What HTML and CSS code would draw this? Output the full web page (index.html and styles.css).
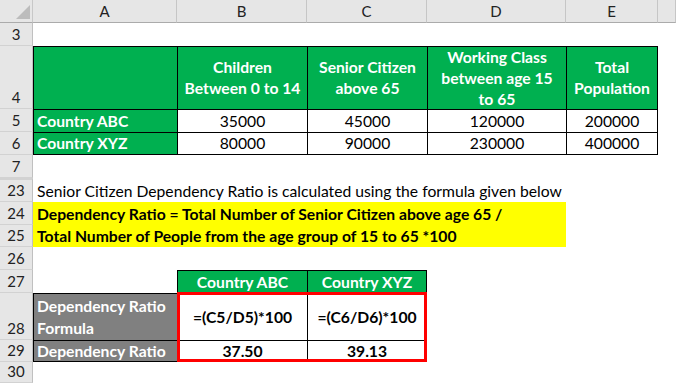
FILE: index.html
```html
<!DOCTYPE html>
<html>
<head>
<meta charset="utf-8">
<link rel="stylesheet" href="styles.css">
</head>
<body>
<div class="sheet">
  <div class="corner"><svg width="33" height="23" viewBox="0 0 33 23"><polygon points="16,19 30,19 30,5" fill="#bcbcbc"/></svg></div>
  <div class="colhead">A</div>
  <div class="colhead">B</div>
  <div class="colhead">C</div>
  <div class="colhead">D</div>
  <div class="colhead">E</div>
  <div class="colhead"></div>

  <div class="rowhead">3</div>
  <div class="fill s6"></div>

  <div class="rowhead">4</div>
  <div class="hd b"></div>
  <div class="hd b">Children<br>Between 0 to 14</div>
  <div class="hd b">Senior Citizen<br>above 65</div>
  <div class="hd b">Working Class<br>between age 15<br>to 65</div>
  <div class="hd b br">Total<br>Population</div>
  <div class="fill"></div>

  <div class="rowhead">5</div>
  <div class="lbl b">Country ABC</div>
  <div class="num b">35000</div>
  <div class="num b">45000</div>
  <div class="num b">120000</div>
  <div class="num b br">200000</div>
  <div class="fill"></div>

  <div class="rowhead">6</div>
  <div class="lbl b bb">Country XYZ</div>
  <div class="num b bb">80000</div>
  <div class="num b bb">90000</div>
  <div class="num b bb">230000</div>
  <div class="num b br bb">400000</div>
  <div class="fill"></div>

  <div class="rowhead">7</div>
  <div class="fill s6"></div>

  <div class="rowhead r23">23</div>
  <div class="note s6">Senior Citizen Dependency Ratio is calculated using the formula given below</div>

  <div class="rowhead">24</div>
  <div class="hl s4">Dependency Ratio = Total Number of Senior Citizen above age 65 /</div>
  <div class="fill s2"></div>

  <div class="rowhead">25</div>
  <div class="hl s4">Total Number of People from the age group of 15 to 65 *100</div>
  <div class="fill s2"></div>

  <div class="rowhead">26</div>
  <div class="fill s6"></div>

  <div class="rowhead">27</div>
  <div class="fill"></div>
  <div class="hd b">Country ABC</div>
  <div class="hd b br">Country XYZ</div>
  <div class="fill s3"></div>

  <div class="rowhead">28</div>
  <div class="gl b">Dependency Ratio<br>Formula</div>
  <div class="fm b">=(C5/D5)*100</div>
  <div class="fm b br">=(C6/D6)*100</div>
  <div class="fill s3"></div>

  <div class="rowhead">29</div>
  <div class="gl b bb">Dependency Ratio</div>
  <div class="fm b bb">37.50</div>
  <div class="fm b br bb">39.13</div>
  <div class="fill s3"></div>

  <div class="rowhead">30</div>
  <div class="fill s6"></div>

  <div class="sel"></div>
</div>
</body>
</html>
```

FILE: styles.css
```css
html, body {
  margin: 0;
  padding: 0;
  background: #fff;
  overflow: hidden;
}

.sheet {
  display: grid;
  grid-template-columns: 33px 144px 130px 120px 139px 92px 18px;
  grid-template-rows: 23px 23px 63px 23px 23px 23px 24px 23px 22px 23px 23px 47px 22px 21px;
  width: 676px;
  height: 383px;
  overflow: hidden;
  font-family: Lato, "Open Sans", sans-serif;
  font-size: 15.7px;
  color: #000;
  position: relative;
}

.corner {
  background: #e6e6e6;
  border-right: 1px solid #c8c8c8;
  border-bottom: 1px solid #ababab;
  box-sizing: border-box;
  overflow: hidden;
}
.corner svg { display: block; }

.colhead {
  background: #e6e6e6;
  border-right: 1px solid #c6c6c6;
  border-bottom: 1px solid #ababab;
  box-sizing: border-box;
  display: flex;
  align-items: center;
  justify-content: center;
  color: #222;
  font-size: 15px;
}

.rowhead {
  background: #e6e6e6;
  border-right: 1px solid #c0c0c0;
  border-bottom: 1px solid #d2d2d2;
  box-sizing: border-box;
  display: flex;
  align-items: flex-end;
  justify-content: center;
  line-height: 21px;
  color: #222;
  font-size: 15px;
  overflow: hidden;
}
.r23 { border-top: 2px solid #d2d2d2; }

.fill { background: #fff; }
.s2 { grid-column: span 2; }
.s3 { grid-column: span 3; }
.s4 { grid-column: span 4; }
.s6 { grid-column: span 6; }

.b { border-left: 1px solid #000; border-top: 1px solid #000; }
.br { border-right: 1px solid #000; }
.bb { border-bottom: 1px solid #000; }

.hd {
  background: #00b050;
  color: #fff;
  font-weight: 700;
  text-align: center;
  line-height: 21px;
  display: flex;
  align-items: center;
  justify-content: center;
  white-space: nowrap;
}

.lbl {
  background: #00b050;
  color: #fff;
  font-weight: 700;
  display: flex;
  align-items: flex-end;
  line-height: 21px;
  padding-left: 3px;
  white-space: nowrap;
}

.num {
  background: #fff;
  display: flex;
  align-items: flex-end;
  justify-content: center;
  line-height: 21px;
}

.note {
  display: flex;
  align-items: flex-end;
  line-height: 21px;
  padding-left: 4px;
  white-space: nowrap;
}

.hl {
  background: #ffff00;
  font-weight: 700;
  display: flex;
  align-items: flex-end;
  line-height: 21px;
  padding-left: 4px;
  white-space: nowrap;
}

.gl {
  background: #808080;
  color: #fff;
  font-weight: 700;
  display: flex;
  align-items: center;
  line-height: 22px;
  padding-left: 3px;
  white-space: nowrap;
}

.fm {
  background: #fff;
  font-weight: 700;
  display: flex;
  align-items: center;
  justify-content: center;
  line-height: 21px;
  white-space: nowrap;
}

.sel {
  position: absolute;
  grid-column: 3 / 5;
  grid-row: 12 / 14;
  top: -1px;
  left: 0;
  right: 0;
  bottom: 0;
  border: 3px solid #ff0000;
  z-index: 2;
  pointer-events: none;
}
```
